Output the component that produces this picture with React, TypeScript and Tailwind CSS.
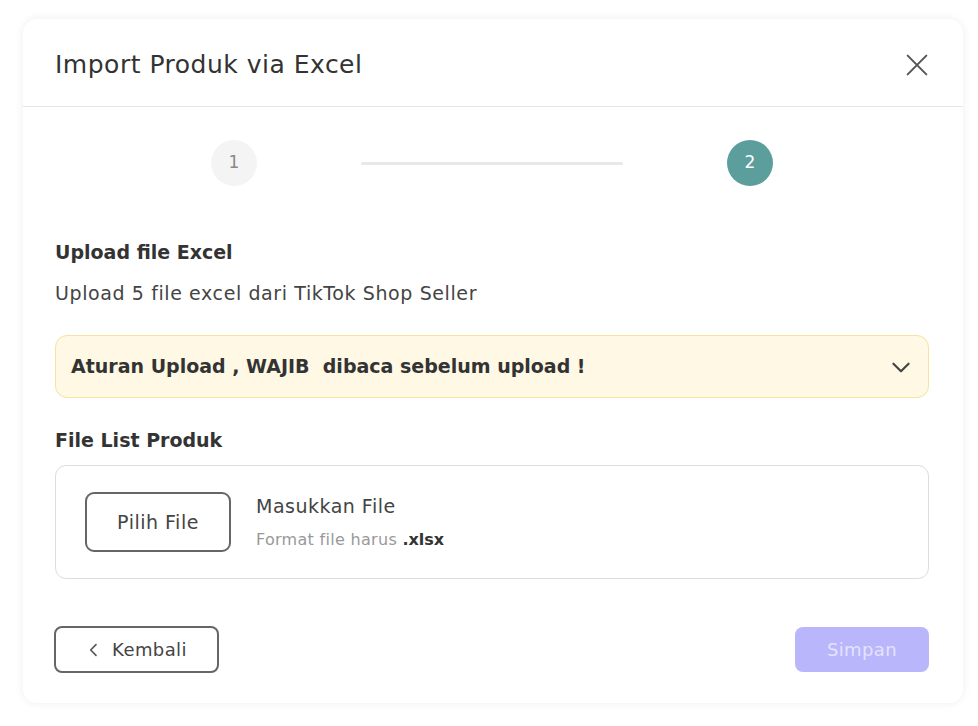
import React from "react";

const font = { fontFamily: '"DejaVu Sans", "Open Sans", sans-serif' };

const ImportDialog: React.FC = () => {
  return (
    <div className="w-[978px] h-[726px] bg-white pt-[19px] pl-[23px]" style={font}>
      <div className="w-[940px] h-[684px] bg-white rounded-[14px] shadow-[0_0_10px_rgba(0,0,0,0.07)] flex flex-col">
        {/* Header */}
        <div className="h-[88px] pt-[4px] flex items-center justify-between pl-[32px] pr-[32px] border-b border-[#e6e6e6]">
          <h2 className="text-[25px] tracking-[0.5px] text-[#333]">Import Produk via Excel</h2>
          <button className="text-[#555]">
            <svg width="28" height="28" viewBox="0 0 24 24" fill="none" stroke="currentColor" strokeWidth="1.7" strokeLinecap="round">
              <path d="M4 4l16 16M20 4L4 20" />
            </svg>
          </button>
        </div>

        {/* Steps */}
        <div className="pt-[33px] pb-[52px] flex items-center pl-[188px]">
          <div className="w-[46px] h-[46px] rounded-full bg-[#f4f4f4] flex items-center justify-center text-[#888] text-[17px]">1</div>
          <div className="w-[262px] h-[3px] bg-[#e8e8e8] rounded-full ml-[104px] mr-[104px]" />
          <div className="w-[46px] h-[46px] rounded-full bg-[#5c9e9c] flex items-center justify-center text-white text-[17px]">2</div>
        </div>

        <div className="pl-[32px] pr-[34px] flex flex-col">
          <h3 className="text-[19px] font-bold text-[#333] leading-[28px]">Upload file Excel</h3>
          <p className="text-[19px] tracking-[0.6px] text-[#444] leading-[28px] mt-[13px]">Upload 5 file excel dari TikTok Shop Seller</p>

          {/* Accordion */}
          <div className="mt-[28px] h-[63px] rounded-[12px] bg-[#fef8e4] border border-[#f7e2a2] flex items-center justify-between pl-[15px] pr-[14px]">
            <span className="text-[19px] font-bold text-[#333]">Aturan Upload , WAJIB&nbsp; dibaca sebelum upload !</span>
            <svg width="26" height="26" viewBox="0 0 24 24" fill="none" stroke="#444" strokeWidth="2" strokeLinecap="round" strokeLinejoin="round">
              <path d="M5 9l7 7 7-7" />
            </svg>
          </div>

          <h3 className="mt-[28px] text-[19px] font-bold text-[#333] leading-[28px]">File List Produk</h3>

          {/* File box */}
          <div className="mt-[11px] h-[114px] rounded-[11px] border border-[#dcdcdc] flex items-center pl-[29px]">
            <button className="w-[146px] h-[60px] rounded-[9px] border-2 border-[#666] text-[19px] tracking-[0.5px] text-[#444]">Pilih File</button>
            <div className="ml-[25px] flex flex-col">
              <span className="text-[19px] tracking-[0.5px] text-[#444] leading-[26px]">Masukkan File</span>
              <span className="mt-[10px] text-[16px] tracking-[0.3px] text-[#999] leading-[22px]">
                Format file harus <span className="font-bold text-[#333] tracking-normal">.xlsx</span>
              </span>
            </div>
          </div>

          {/* Footer */}
          <div className="mt-[47px] flex items-center justify-between">
            <button className="ml-[-1px] w-[165px] h-[47px] rounded-[8px] border-2 border-[#666] flex items-center justify-center gap-[10px] text-[18px] tracking-[0.4px] text-[#444]">
              <svg width="16" height="16" viewBox="0 0 24 24" fill="none" stroke="#555" strokeWidth="2.4" strokeLinecap="round" strokeLinejoin="round">
                <path d="M15 4l-8 8 8 8" />
              </svg>
              Kembali
            </button>
            <button className="w-[134px] h-[45px] rounded-[8px] bg-[#b9b6fb] text-[18px] tracking-[0.4px] text-[#e4e3ff]">Simpan</button>
          </div>
        </div>
      </div>
    </div>
  );
};

export default function App() {
  return <ImportDialog />;
}
